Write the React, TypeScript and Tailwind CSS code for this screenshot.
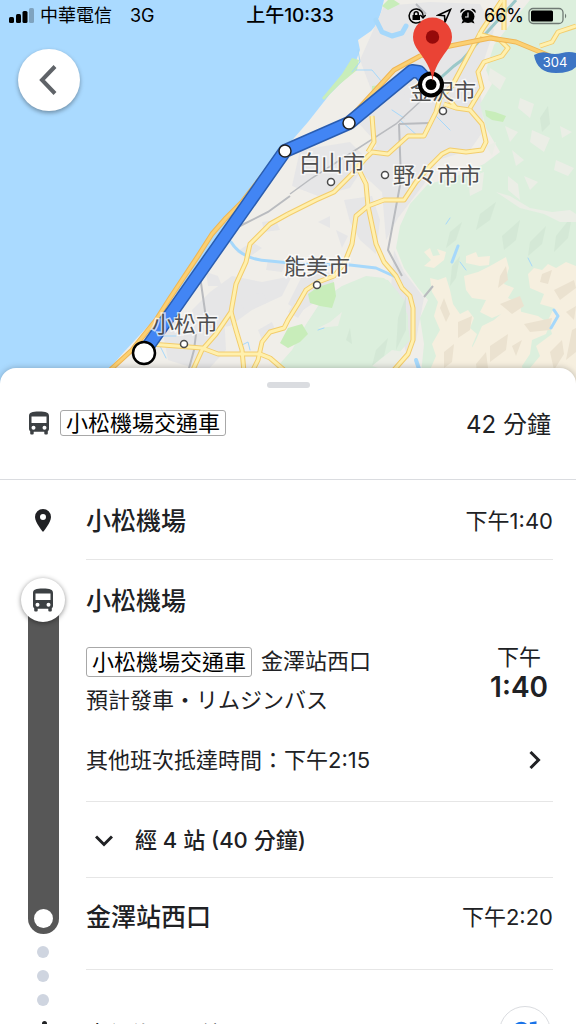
import type { ReactNode } from "react";
import { clsx } from "clsx";

const CITIES = [
  { name: "金沢市", x: 443, y: 99, dot: [443, 111] },
  { name: "白山市", x: 332, y: 171, dot: [331, 182] },
  { name: "野々市市", x: 437, y: 183, dot: [385, 175] },
  { name: "能美市", x: 317, y: 274, dot: [317, 285] },
  { name: "小松市", x: 185, y: 332, dot: [184, 344] },
];

const LAND =
  "M384 0 L381 12 L377 24 L371 31 L358 40 L360 50 L352 72 L330 94 L308 122 L288 145 L262 183 L232 225 L200 268 L172 298 L150 324 L124 352 L96 384 L576 384 L576 0Z";

const GREENS = [
  "M530 0 L512 22 L494 45 L486 70 L492 84 L480 104 L486 128 L500 152 L484 164 L452 178 L428 184 L410 204 L400 226 L396 248 L404 268 L418 288 L428 300 L420 318 L424 344 L420 384 L576 384 L576 0Z",
  "M366 276 L384 278 L398 292 L408 316 L408 338 L396 352 L376 372 L300 384 L262 384 L292 350 L305 326 L322 300 L342 286Z",
  "M300 384 L330 334 L352 300 L372 278 L388 280 L404 300 L410 340 L388 366 L360 384Z",
];

const URBAN = [
  "M384 6 L430 2 L480 4 L494 30 L484 60 L470 92 L460 124 L434 154 L404 170 L384 164 L374 140 L352 116 L372 92 L360 60Z",
  "M412 60 L470 40 L480 84 L484 130 L470 150 L438 160 L424 184 L398 218 L386 240 L382 192 L360 172 L372 150 L396 130Z",
  "M300 150 L350 142 L368 160 L350 188 L318 196 L292 186Z",
  "M210 292 L232 276 L262 282 L292 276 L282 296 L252 310 L230 326 L198 330 L192 310Z",
  "M302 276 L336 272 L330 292 L300 312 L288 304Z",
  "M160 318 L224 314 L226 350 L206 372 L168 360Z",
  "M394 250 L404 272 L424 298 L416 340 L408 360 L400 330 L390 300Z",
  "M344 200 L372 196 L380 220 L376 254 L360 240 L350 222Z",
];

const PARKS = [
  "M388 0 L394 0 L400 4 L388 10 L382 6Z",
  "M352 58 L359 60 L357 70 L340 84 L324 100 L322 98 L342 74Z",
  "M372 86 L381 85 L380 92 L372 94Z",
  "M485 110 L495 112 L506 116 L503 122 L492 120 L486 116Z",
  "M308 294 L318 287 L334 282 L336 296 L332 308 L320 306 L310 303Z",
  "M288 328 L302 324 L308 334 L300 342 L288 348 L280 343Z",
];

const HILLS = [
  "M424 252 L430 248 L433 256 L440 255 L437 249 L446 252 L444 260 L434 268 L424 266 L431 260Z",
  "M466 256 L476 252 L478 257 L490 256 L489 265 L480 266 L466 263Z",
  "M430 278 L438 280 L446 277 L450 290 L453 304 L460 314 L468 310 L474 318 L470 328 L477 334 L472 346 L478 358 L474 384 L438 384 L430 370 L436 356 L432 344 L440 330 L434 316 L438 302 L432 292Z",
  "M464 276 L478 272 L490 266 L506 257 L509 268 L504 284 L514 288 L508 298 L520 304 L522 318 L506 312 L492 318 L480 312 L486 300 L472 298 L466 290Z",
  "M528 274 L534 268 L542 270 L548 264 L556 268 L566 262 L576 266 L576 384 L532 384 L530 368 L540 356 L536 346 L552 334 L548 320 L554 308 L540 304 L544 294 L530 288Z",
  "M476 340 L482 326 L494 320 L508 308 L522 312 L538 316 L550 324 L546 334 L532 340 L530 354 L522 366 L526 384 L472 384 L478 366 L470 352Z",
];

const SHADES = [
  "M500 304 L520 296 L524 306 L512 314Z",
  "M524 324 L552 318 L550 330 L530 332Z",
  "M458 322 L472 316 L470 330 L458 338Z",
  "M490 346 L508 334 L506 350 L490 362Z",
  "M554 290 L574 280 L576 288 L560 300Z",
  "M444 298 L450 314 L446 322 L440 308Z",
  "M550 352 L562 340 L564 354 L554 370Z",
  "M572 330 L576 328 L576 352 L566 360Z",
  "M476 364 L486 352 L488 368 L478 378Z",
  "M506 266 L508 280 L498 288 L500 276Z",
  "M542 274 L552 270 L548 284 L540 282Z",
  "M444 352 L454 344 L452 362 L444 368Z",
  "M512 346 L522 340 L516 356Z",
  "M566 312 L576 306 L574 320Z",
];

const GREEN_SHADES = [
  "M480 214 L496 202 L490 220 L476 230Z",
  "M450 232 L462 222 L456 240 L446 248Z",
  "M530 242 L546 226 L542 244 L528 256Z",
  "M556 236 L572 216 L568 238 L554 252Z",
  "M452 266 L460 256 L456 278 L450 286Z",
  "M398 318 L406 296 L406 330 L396 350Z",
  "M376 350 L388 338 L384 356 L372 366Z",
  "M502 236 L520 220 L516 240 L504 250Z",
  "M540 118 L548 106 L550 124 L542 132Z",
  "M346 340 L350 328 L352 344Z",
];

// Pale clearings scattered over the forest and the plain
const CLEARINGS = [
  "M490 68 L506 78 L500 90 L488 80Z",
  "M520 98 L534 104 L530 118 L518 108Z",
  "M532 130 L550 138 L544 152 L530 142Z",
  "M505 126 L518 132 L510 142Z",
  "M556 160 L574 168 L568 176 L554 170Z",
  "M512 150 L524 160 L516 166Z",
  "M496 192 L510 196 L530 208 L552 212 L570 210 L576 214 L576 222 L560 222 L544 214 L520 208Z",
  "M468 178 L484 172 L482 190 L470 196Z",
  "M508 176 L518 184 L520 200 L508 190Z",
  "M524 176 L538 182 L530 190Z",
  "M486 146 L496 142 L492 156Z",
  "M330 322 L342 312 L338 326 L318 328Z",
  "M372 366 L392 350 L404 352 L390 372Z",
  "M560 126 L572 132 L562 138Z",
];

const PATCHES = [
  "M236 252 L252 242 L262 248 L248 258Z",
  "M206 272 L218 276 L222 286 L208 286Z",
  "M318 222 L330 216 L330 228Z",
  "M262 222 L276 220 L280 230 L264 232Z",
  "M336 230 L348 236 L342 248Z",
  "M238 300 L262 292 L268 302 L246 312Z",
  "M268 260 L286 262 L282 272 L266 270Z",
  "M296 300 L306 306 L298 318 L288 312Z",
  "M258 330 L272 322 L276 332 L262 340Z",
];

const MAJOR_ROADS = [
  "M288 214 L316 200 L334 192 L352 174 L364 160 L372 152 L388 154 L408 136 L424 136 L436 112 L440 98 L452 86 L468 56 L482 30 L502 0",
  "M478 34 L500 40 L508 48 L502 56 L484 62 L478 72 L482 88 L470 108",
  "M444 104 L456 108 L470 110 L482 124 L486 142 L482 150 L466 152 L450 150 L442 154 L430 166 L416 182 L404 200 L384 200 L368 206 L356 216 L352 244 L344 264 L334 276 L318 282 L306 290 L298 304 L288 320 L284 328 L270 332 L262 342 L258 360 L252 372",
  "M356 164 L366 184 L368 206 L376 244 L384 262 L396 276 L402 288 L410 296 L413 308 L413 340 L408 354 L394 370",
  "M372 116 L374 142 L368 152",
  "M448 98 L456 108",
  "M504 30 L504 0",
  "M540 46 L552 42 L558 32 L576 26",
  "M288 214 L270 224 L250 244 L246 262 L236 284 L231 312 L216 334 L202 350 L192 372",
  "M231 312 L236 330 L242 350 L244 372",
  "M150 344 L202 348 L218 354 L260 354 L270 358 L284 370",
];

const EXPRESSWAY =
  "M108 372 L132 350 L156 320 L170 298 L198 256 L212 234 L226 218 L242 202 L284 148 L320 132 L350 118 L394 70 L420 56 L450 46 L490 38 L516 42 L550 56";

const ROUTE = "M144 352 L285 151 L349 123 L412 71 L419 72 L431 85";

const STOPS = [
  [285, 151],
  [349, 123],
];

function RouteMap() {
  return (
    <svg
      viewBox="0 0 576 384"
      preserveAspectRatio="xMidYMid slice"
      className="absolute inset-0 h-full w-full"
      role="img"
      aria-label="小松機場 - 金沢市"
    >
      <rect width="576" height="384" fill="#aadaff" />
      <path d={LAND} fill="#f0eee9" />
      <g fill="#e6e6e7">
        {URBAN.map((d) => <path key={d} d={d} />)}
        {PATCHES.map((d) => <path key={d} d={d} />)}
      </g>
      <g fill="#dcefdd">{GREENS.map((d) => <path key={d} d={d} />)}</g>
      <g fill="#cfe5d2" opacity="0.6">{GREEN_SHADES.map((d) => <path key={d} d={d} />)}</g>
      <g fill="#ebeee6">{CLEARINGS.map((d) => <path key={d} d={d} />)}</g>
      <g fill="#c8edba">{PARKS.map((d) => <path key={d} d={d} />)}</g>
      <g fill="#f6efdf">{HILLS.map((d) => <path key={d} d={d} />)}</g>
      <g fill="#ebe2d0">{SHADES.map((d) => <path key={d} d={d} />)}</g>

      {/* harbour and rivers */}
      <g fill="none" stroke="#a6d8fb" strokeLinecap="round" strokeLinejoin="round">
        <path d="M376 20 L382 32 L392 36 L402 33 L406 26" strokeWidth="5" />
        <path d="M231 242 Q242 260 270 261 L300 264 L350 265 L376 268 L398 278" strokeWidth="3" />
        <path d="M452 262 L458 246 M551 328 L558 316 L554 310" strokeWidth="3" />
        <path d="M416 360 L420 372" strokeWidth="4" />
        <path
          d="M358 50 L360 62 L352 72 M356 70 L372 70 L382 82 M392 110 L404 118 M436 116 L450 130 M400 120 L420 138 M446 224 L450 218 M160 346 L166 358 M240 346 L248 342 L250 350 M164 336 L176 336 M460 262 L466 270 M528 258 L532 266 M318 330 L324 328"
          strokeWidth="1"
        />
      </g>

      {/* railways */}
      <g fill="none" stroke="#b9bbbf" strokeWidth="2">
        <path d="M240 226 L268 212 L290 196" />
        <path d="M290 194 L312 178 L340 160 L396 124 L424 98" strokeWidth="1.500" />
        <path d="M399 124 L430 123 M399 124 L401 180 L388 250 L402 276" />
        <path d="M200 276 L206 318 M196 334 L194 350 L188 372 M424 297 L433 286" />
        <path d="M416 4 L426 14" />
      </g>
      <path d="M436 82 L454 66 L462 60 L516 0" fill="none" stroke="#9bc8c9" strokeWidth="3" />

      <g fill="none" strokeLinejoin="round">
        {MAJOR_ROADS.map((d) => <path key={d} d={d} stroke="#f3cd6c" strokeWidth="5" />)}
        {MAJOR_ROADS.map((d) => <path key={d} d={d} stroke="#fff0ae" strokeWidth="3" />)}
        {/* expressway along the coast */}
        <path d={EXPRESSWAY} stroke="#f0b653" strokeWidth="5" />
        <path d={EXPRESSWAY} stroke="#fbd073" strokeWidth="3" />
      </g>

      <path d={ROUTE} fill="none" stroke="#2a5db0" strokeWidth="14" strokeLinejoin="round" />
      <path d={ROUTE} fill="none" stroke="#4285f4" strokeWidth="11" strokeLinejoin="round" />

      <path
        d="M534 55 Q541 51 548 53 Q555 55 562 53 Q569 51 576 53 V67 Q570 73 556 73 Q537 73 534 55Z"
        fill="#3d75c4"
      />
      <text x="555" y="67" textAnchor="middle" fill="#fff" className="font-[Inter] text-[13px]">
        304
      </text>

      {CITIES.map((city) => (
        <g key={city.name}>
          <circle cx={city.dot[0]} cy={city.dot[1]} r="3.500" fill="#fff" stroke="#4b4b4b" strokeWidth="1.500" />
          <text
            x={city.x}
            y={city.y}
            textAnchor="middle"
            fill="#4f4f4f"
            stroke="#fff"
            strokeOpacity="0.7"
            strokeWidth="3"
            paintOrder="stroke"
            className="text-[22px]"
          >
            {city.name}
          </text>
        </g>
      ))}

      {STOPS.map(([x, y]) => (
        <circle key={x} cx={x} cy={y} r="6" fill="#fff" stroke="#222" strokeWidth="1.500" />
      ))}
      <circle cx="144" cy="353" r="11" fill="#fff" stroke="#000" strokeWidth="2.500" />
      <circle cx="431" cy="84.500" r="11" fill="#fff" stroke="#000" strokeWidth="4" />
      <circle cx="431" cy="84.500" r="5.500" fill="#000" />
      <path
        d="M432.500 81 C431 68 425 60 418.500 51 C415 46 413 42 413 37 A19.500 19.500 0 0 1 452 37 C452 42 450 46 446.500 51 C440 60 434 68 432.500 81Z"
        fill="#ea4335"
      />
      <circle cx="432.500" cy="37" r="6.700" fill="#960a0a" />
    </svg>
  );
}

function StatusBar() {
  return (
    <div className="relative grid h-8 grid-cols-[1fr_auto_1fr] items-center px-2 text-[18px] leading-8 text-black">
      <div className="flex items-center">
        <svg viewBox="0 0 26 16" className="mr-[6px] h-4 w-[26px]" aria-hidden="true">
          <rect x="1" y="9" width="5" height="6" rx="1.500" />
          <rect x="8" y="6" width="5" height="9" rx="1.500" />
          <rect x="14.500" y="3" width="5" height="12" rx="1.500" />
          <rect x="21" y="0" width="5" height="15" rx="1.500" opacity="0.25" />
        </svg>
        <span>中華電信</span>
        <span className="ml-[18px]">3G</span>
      </div>
      <span className="pl-1 text-[19px] font-medium">上午10:33</span>
      <div className="flex items-center justify-end">
        <svg viewBox="0 0 18 16" className="mr-[10px] h-4 w-[18px]" fill="none" stroke="#000" strokeWidth="1.500" aria-hidden="true">
          <path d="M13.500 3.500 A7 7 0 1 0 12.500 13.500 M13.500 3.500 A7 7 0 0 1 15 9" />
          <path d="M12.300 7 L15 9.800 L17.600 7" />
          <rect x="4.500" y="7" width="7.500" height="5" rx="0.500" fill="#000" stroke="none" />
          <path d="M6.200 7.500 V5.700 A2 2 0 0 1 10.200 5.700 V7.500" />
        </svg>
        <svg viewBox="0 0 16 16" className="mr-2 h-4 w-4" fill="none" stroke="#000" strokeWidth="1.600" aria-hidden="true">
          <path d="M14.500 1.500 L2 7.200 L8.500 7.800 L9 14.300Z" />
        </svg>
        <svg viewBox="0 0 16 16" className="mr-2 h-4 w-4" aria-hidden="true">
          <circle cx="8" cy="8.500" r="6.500" />
          <path d="M0.500 5 A3.300 3.300 0 0 1 5 1Z M15.500 5 A3.300 3.300 0 0 0 11 1Z M3 12 L1.500 15.500 L5.500 14Z M13 12 L14.500 15.500 L10.500 14Z" />
          <path d="M8 4.500 V9 H5" stroke="#e6e6e6" strokeWidth="1.200" fill="none" />
        </svg>
        <span>66%</span>
        <svg viewBox="0 0 40 18" className="ml-1 h-[18px] w-10" aria-hidden="true">
          <rect x="1" y="1.500" width="34" height="15" rx="4" fill="none" stroke="#6f7a74" strokeWidth="1.300" />
          <rect x="3" y="3.500" width="22" height="11" rx="1.500" />
          <path d="M37 6.500 Q39.500 9 37 11.500Z" fill="#6f7a74" />
        </svg>
      </div>
    </div>
  );
}

function BusIcon() {
  return (
    <svg viewBox="0 0 20 24" className="h-6 w-5" aria-hidden="true">
      <path
        fill="#3c4043"
        fillRule="evenodd"
        d="M0 5 C0 1.500 3 0.500 10 0.500 S20 1.500 20 5 V18 Q20 19.500 18.800 20.300 V22.500 Q18.800 23.500 17.800 23.500 H16.300 Q15.300 23.500 15.300 22.500 V20.800 H4.700 V22.500 Q4.700 23.500 3.700 23.500 H2.200 Q1.200 23.500 1.200 22.500 V20.300 Q0 19.500 0 18Z M2.500 5.500 V12 H17.500 V5.500Z M4.500 14.800 A2 2 0 1 0 4.500 18.800 A2 2 0 1 0 4.500 14.800Z M15.500 14.800 A2 2 0 1 0 15.500 18.800 A2 2 0 1 0 15.500 14.800Z"
      />
    </svg>
  );
}

function LineBadge({ className }: { className?: string }) {
  return (
    <span className={clsx("rounded-[3px] border border-[#a8a8a8] px-[5px] text-[22px] text-black", className)}>
      小松機場交通車
    </span>
  );
}

function Row({ className, children }: { className?: string; children: ReactNode }) {
  return (
    <div className={clsx("flex items-center justify-between border-b border-[#e6e6e6]", className)}>
      {children}
    </div>
  );
}

export default function App() {
  return (
    <div className="flex h-dvh flex-col overflow-hidden bg-white font-[Inter,'Noto_Sans_CJK_TC',sans-serif] text-[#202124]">
      <header className="relative h-96 shrink-0">
        <RouteMap />
        <StatusBar />
        <button
          type="button"
          aria-label="返回"
          className="relative mt-[17px] ml-[18px] flex size-[62px] items-center justify-center rounded-full bg-white pr-[2px] shadow-[0_2px_4px_rgba(0,0,0,0.35)]"
        >
          <svg viewBox="0 0 18 30" className="h-[30px] w-[18px]" fill="none" stroke="#5f6368" strokeWidth="4" aria-hidden="true">
            <path d="M16 1.500 L3 15 L16 28.500" />
          </svg>
        </button>
      </header>

      <main className="relative -mt-4 flex-1 rounded-t-2xl bg-white shadow-[0_0_6px_rgba(0,0,0,0.25)]">
        <div className="flex h-[112px] flex-col border-b border-[#dadce0]">
          <div className="mt-[14px] h-[6px] w-[43px] self-center rounded-full bg-[#dadce0]" />
          <div className="mt-[17px] flex items-center pr-[25px] pl-[29px]">
            <BusIcon />
            <LineBadge className="ml-[11px] leading-6" />
            <span className="ml-auto pt-1 text-[24px] leading-8">42 分鐘</span>
          </div>
        </div>

        <div className="flex pr-[23px]">
          <div className="flex w-[86px] shrink-0 flex-col items-center">
            <svg viewBox="0 0 16 23" className="mt-[29px] h-[23px] w-4" aria-hidden="true">
              <path
                fill="#202124"
                fillRule="evenodd"
                d="M8 0 A8 8 0 0 0 0 8 C0 13.500 8 23 8 23 S16 13.500 16 8 A8 8 0 0 0 8 0Z M8 5 A3 3 0 1 1 8 11 A3 3 0 1 1 8 5Z"
              />
            </svg>
            <div className="z-10 mt-[46px] flex size-11 items-center justify-center rounded-full bg-white shadow-[0_1px_5px_rgba(0,0,0,0.45)]">
              <BusIcon />
            </div>
            <div className="-mt-[22px] flex h-[334px] w-[31px] items-end justify-center rounded-b-full bg-[#575757] pb-[6px]">
              <span className="size-[19px] rounded-full bg-white" />
            </div>
            <div className="mt-3 flex flex-col gap-3">
              <span className="size-3 rounded-full bg-[#cfd5e0]" />
              <span className="size-3 rounded-full bg-[#cfd5e0]" />
              <span className="size-3 rounded-full bg-[#cfd5e0]" />
            </div>
            <svg viewBox="0 0 16 28" className="mt-[15px] h-7 w-4 shrink-0" aria-hidden="true">
              <circle cx="9.500" cy="2.500" r="2.500" fill="#202124" />
              <path d="M9 7 L6 26 M9 7 L3 11 V15 M9 8 L11 13 L15 14 M8 16 L12 20 V27" fill="none" stroke="#202124" strokeWidth="2.500" />
            </svg>
          </div>

          <div className="min-w-0 flex-1">
            <Row className="h-20 pt-1">
              <h2 className="text-[25px] font-medium">小松機場</h2>
              <span className="text-[22px]">下午1:40</span>
            </Row>

            <section className="flex h-[242px] flex-col border-b border-[#e6e6e6]">
              <h2 className="mt-[21px] text-[25px] leading-10 font-medium">小松機場</h2>
              <div className="mt-6 flex justify-between">
                <div>
                  <div className="flex items-center">
                    <LineBadge className="leading-7" />
                    <span className="ml-[9px] text-[22px]">金澤站西口</span>
                  </div>
                  <p className="mt-[6px] text-[22px] leading-8">預計發車・リムジンバス</p>
                </div>
                <div className="mr-[5px] text-center">
                  <div className="text-[22px] leading-6">下午</div>
                  <div className="text-[28px] leading-9 font-semibold">1:40</div>
                </div>
              </div>
              <button type="button" className="mt-7 flex items-center justify-between text-left text-[22px] leading-8">
                <span>其他班次抵達時間：下午2:15</span>
                <svg viewBox="0 0 12 18" className="mr-3 h-[18px] w-3" fill="none" stroke="#202124" strokeWidth="3" aria-hidden="true">
                  <path d="M1.500 1 L9.500 9 L1.500 17" />
                </svg>
              </button>
            </section>

            <button
              type="button"
              aria-expanded="false"
              className="flex h-[76px] w-full items-center border-b border-[#e6e6e6] pt-[2px] pl-[9px] text-[22px] font-medium"
            >
              <svg viewBox="0 0 18 12" className="mr-[22px] h-3 w-[18px]" fill="none" stroke="#202124" strokeWidth="3" aria-hidden="true">
                <path d="M1 1.500 L9 9.500 L17 1.500" />
              </svg>
              經 4 站 (40 分鐘)
            </button>

            <Row className="h-[92px] pb-3">
              <h2 className="text-[25px] font-medium">金澤站西口</h2>
              <span className="text-[22px]">下午2:20</span>
            </Row>

            <div className="flex items-start justify-between pt-9">
              <span className="mt-3 text-[22px] leading-8">步行約 4 分鐘 (240 公尺)</span>
              <button
                type="button"
                aria-label="路線"
                className="mr-[2px] flex size-[52px] items-center justify-center rounded-full border border-[#dadce0]"
              >
                <svg viewBox="0 0 24 24" className="size-6" fill="none" stroke="#1a73e8" strokeWidth="3" aria-hidden="true">
                  <path d="M1 7 Q8 0 14 6 L8 13 M17 4 L22 3 V21" />
                </svg>
              </button>
            </div>
          </div>
        </div>
      </main>
    </div>
  );
}
